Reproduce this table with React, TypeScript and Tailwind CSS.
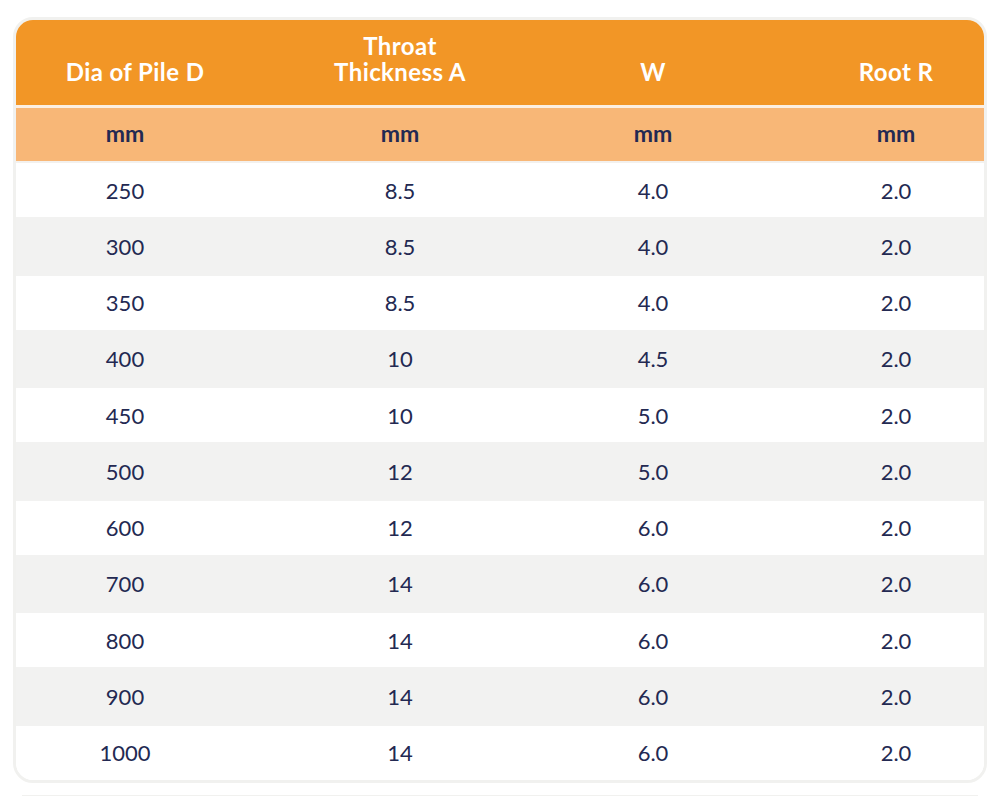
import React from "react";

const rows: [string, string, string, string][] = [
  ["250", "8.5", "4.0", "2.0"],
  ["300", "8.5", "4.0", "2.0"],
  ["350", "8.5", "4.0", "2.0"],
  ["400", "10", "4.5", "2.0"],
  ["450", "10", "5.0", "2.0"],
  ["500", "12", "5.0", "2.0"],
  ["600", "12", "6.0", "2.0"],
  ["700", "14", "6.0", "2.0"],
  ["800", "14", "6.0", "2.0"],
  ["900", "14", "6.0", "2.0"],
  ["1000", "14", "6.0", "2.0"],
];

const grid = "grid grid-cols-[218px_332px_174px_1fr]";

export default function App() {
  return (
    <div className="w-[1000px] h-[796px] bg-white overflow-hidden font-['Lato','Noto_Sans',sans-serif]">
      <div className="ml-[13px] mt-[17px] w-[974px] border-[3px] border-[#f1f1ef] rounded-[20px] overflow-hidden">
        <div className={`${grid} h-[88px] bg-[#f29626] text-white font-bold text-[24px] tracking-[0.4px] leading-[26px] items-end pb-[20px] border-b-[3px] border-[#fcefe2]`}>
          <div className="text-center pl-[20px]">Dia of Pile D</div>
          <div className="text-center">
            Throat
            <br />
            Thickness A
          </div>
          <div className="text-center">W</div>
          <div className="text-center pl-[68px]">Root R</div>
        </div>
        <div className={`${grid} h-[55px] bg-[#f8b777] text-[#232952] font-bold text-[23px] items-center pb-[2px] border-b-2 border-[#f3f1ee]`}>
          <div className="text-center">mm</div>
          <div className="text-center">mm</div>
          <div className="text-center">mm</div>
          <div className="text-center pl-[68px]">mm</div>
        </div>
        {rows.map((r, i) => (
          <div
            key={i}
            className={`${grid} items-center text-[22px] text-[#232952] ${
              i % 2 === 0 ? "bg-white h-[54px]" : "bg-[#f2f2f1] h-[58.5px]"
            }`}
          >
            <div className="text-center">{r[0]}</div>
            <div className="text-center">{r[1]}</div>
            <div className="text-center">{r[2]}</div>
            <div className="text-center pl-[68px]">{r[3]}</div>
          </div>
        ))}
      </div>
      <div className="ml-[22px] mt-[12px] w-[956px] h-px bg-[#f1f1ef]" />
    </div>
  );
}
